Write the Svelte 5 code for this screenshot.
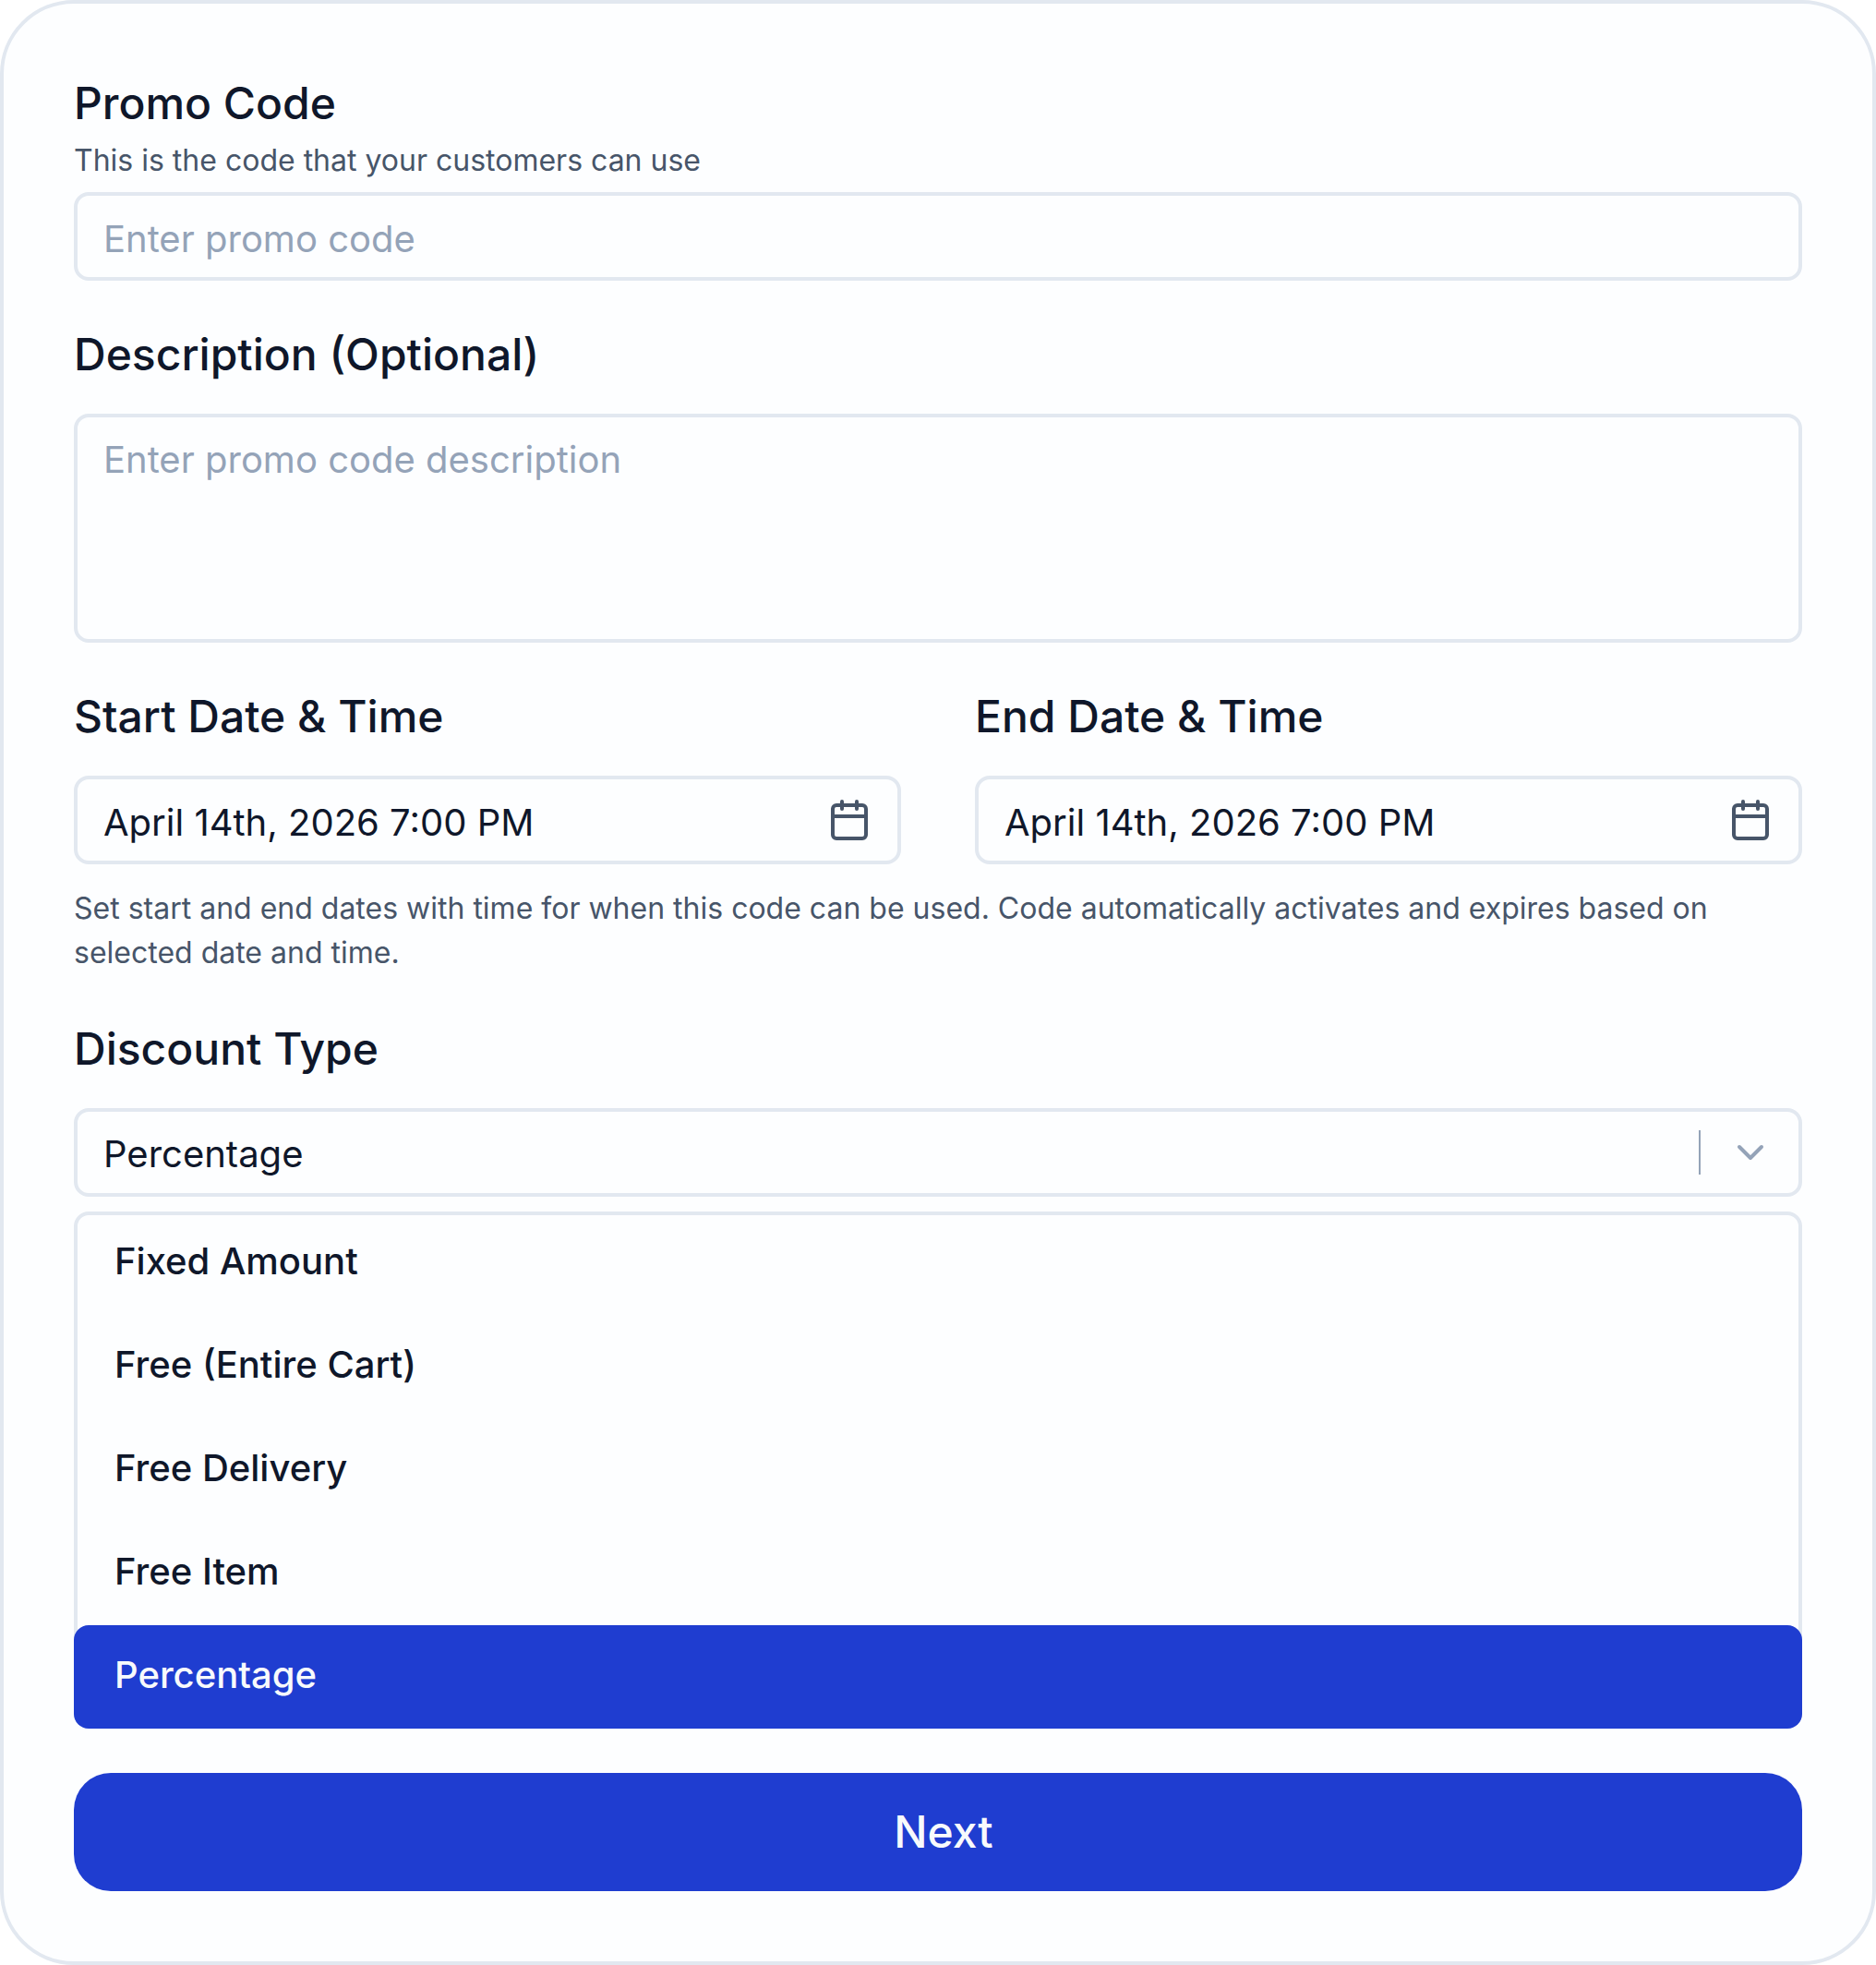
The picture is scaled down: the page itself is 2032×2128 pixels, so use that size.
<script>
  const discountTypes = ['Fixed Amount', 'Free (Entire Cart)', 'Free Delivery', 'Free Item', 'Percentage'];

  let code = $state('');
  let description = $state('');
  let dates = $state([
    { id: 'start-date', label: 'Start Date & Time', value: 'April 14th, 2026 7:00 PM' },
    { id: 'end-date', label: 'End Date & Time', value: 'April 14th, 2026 7:00 PM' },
  ]);
  let discountType = $state('Percentage');
</script>

<form class="card" onsubmit={(e) => e.preventDefault()}>
  <div class="field">
    <label class="title" for="code">Promo Code</label>
    <p class="hint code-hint" id="code-hint">This is the code that your customers can use</p>
    <div class="control">
      <input id="code" type="text" placeholder="Enter promo code" aria-describedby="code-hint" bind:value={code} />
    </div>
  </div>

  <div class="field">
    <label class="title spaced" for="description">Description (Optional)</label>
    <textarea id="description" class="control area" placeholder="Enter promo code description" bind:value={description}></textarea>
  </div>

  <div class="field">
    <div class="dates">
      {#each dates as d (d.id)}
        <div>
          <label class="title spaced" for={d.id}>{d.label}</label>
          <div class="control">
            <input id={d.id} type="text" bind:value={d.value} />
            <svg class="icon calendar" viewBox="0 0 24 24" aria-hidden="true">
              <rect x="3" y="4" width="18" height="18" rx="2" />
              <path d="M8 2v4M16 2v4M3 10h18" />
            </svg>
          </div>
        </div>
      {/each}
    </div>
    <p class="hint dates-hint">
      Set start and end dates with time for when this code can be used. Code automatically activates and expires based on selected date and time.
    </p>
  </div>

  <div class="field">
    <label class="title spaced" for="discount-type">Discount Type</label>
    <div class="control">
      <select id="discount-type" bind:value={discountType}>
        {#each discountTypes as type}
          <option value={type}>{type}</option>
        {/each}
      </select>
      <span class="divider"></span>
      <svg class="icon chevron" viewBox="0 0 24 24" aria-hidden="true">
        <path d="m6 9 6 6 6-6" />
      </svg>
    </div>

    <div class="menu" role="listbox" aria-label="Discount Type">
      {#each discountTypes as type}
        <button
          type="button"
          role="option"
          class="option"
          class:selected={type === discountType}
          aria-selected={type === discountType}
          onclick={() => (discountType = type)}
        >{type}</button>
      {/each}
    </div>
  </div>

  <button type="submit" class="next">Next</button>
</form>

<style>
  :global(body) {
    background: #ffffff;
  }

  .card {
    --ink: #0f172a;
    --muted: #475569;
    --faint: #94a3b8;
    --line: #e2e8f0;
    --blue: #1f3dd0;
    --surface: #fdfeff;

    box-sizing: border-box;
    display: flex;
    flex-direction: column;
    gap: 48px;
    padding: 76px;
    border: 4px solid var(--line);
    border-radius: 80px;
    background: var(--surface);
    color: var(--ink);
    font-family: Inter, 'Liberation Sans', sans-serif;
  }

  .title {
    display: block;
    font-size: 48px;
    font-weight: 500;
    line-height: 64px;
  }
  .title.spaced { margin-bottom: 32px; }

  .hint {
    margin: 0;
    color: var(--muted);
    font-size: 32px;
    line-height: 48px;
  }
  .code-hint { margin: 6px 0 10px; }
  .dates-hint { margin-top: 24px; }

  .control {
    box-sizing: border-box;
    display: flex;
    align-items: center;
    width: 100%;
    height: 96px;
    padding: 0 28px;
    border: 4px solid var(--line);
    border-radius: 16px;
    background: var(--surface);
  }
  .control.area {
    display: block;
    height: 248px;
    padding: 18px 28px;
    resize: none;
  }

  input, select, textarea {
    color: var(--ink);
    font-family: inherit;
    font-size: 40px;
    line-height: 56px;
    outline: none;
  }
  input, select {
    flex: 1;
    min-width: 0;
    height: 100%;
    padding: 4px 0 0;
    border: 0;
    background: none;
    appearance: none;
  }
  ::placeholder { color: var(--faint); opacity: 1; }

  .dates {
    display: grid;
    grid-template-columns: 1fr 1fr;
    gap: 80px;
  }

  .icon {
    flex: none;
    width: 48px;
    height: 48px;
    fill: none;
    stroke-width: 2;
    stroke-linecap: round;
    stroke-linejoin: round;
  }
  .calendar { stroke: var(--muted); }
  .chevron { stroke: var(--faint); }

  .divider {
    width: 2px;
    height: 48px;
    margin: 0 30px;
    background: var(--faint);
  }

  /* the rows sit on top of the menu's border, so the outline is an inset shadow */
  .menu {
    display: flex;
    flex-direction: column;
    margin-top: 16px;
    border-radius: 16px;
    box-shadow: inset 0 0 0 4px var(--line);
  }

  .option {
    height: 112px;
    padding: 0 44px 4px;
    border: 0;
    border-radius: 16px;
    background: none;
    color: var(--ink);
    font: 500 40px/56px Inter, 'Liberation Sans', sans-serif;
    text-align: left;
    cursor: pointer;
  }
  .option.selected {
    background: var(--blue);
    color: #f8fafc;
  }

  .next {
    height: 128px;
    padding: 0 0 0 12px;
    border: 0;
    border-radius: 40px;
    background: var(--blue);
    color: #f8fafc;
    font: 500 48px/64px Inter, 'Liberation Sans', sans-serif;
    cursor: pointer;
  }
</style>
